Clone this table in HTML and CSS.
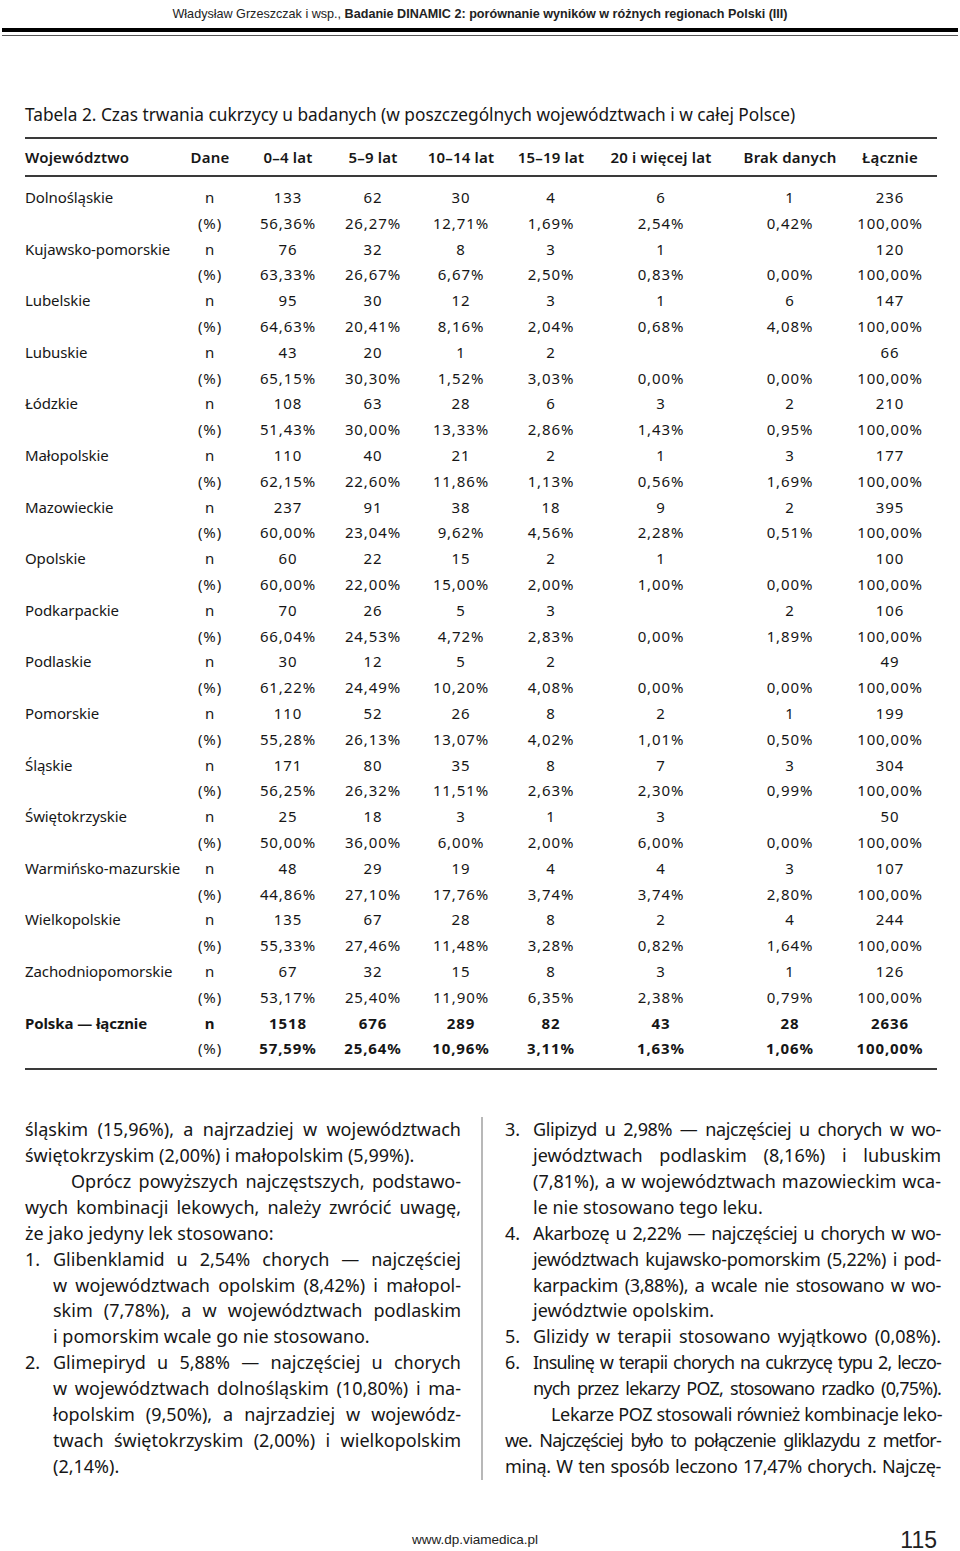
FILE: index.html
```html
<!DOCTYPE html>
<html lang="pl">
<head>
<meta charset="utf-8">
<title>Badanie DINAMIC 2 — Tabela 2</title>
<link rel="stylesheet" href="styles.css">
</head>
<body>
<div class="page">
  <header class="running">
    <p class="running-text">Władysław Grzeszczak i wsp., <b>Badanie DINAMIC 2: porównanie wyników w różnych regionach Polski (III)</b></p>
    <div class="rule-thick"></div>
    <div class="rule-thin"></div>
  </header>

  <section class="tbl-wrap">
    <h2 class="tbl-title">Tabela 2. Czas trwania cukrzycy u badanych (w poszczególnych województwach i w całej Polsce)</h2>
    <table class="data">
      <colgroup>
        <col class="c-name"><col class="c-dane"><col class="c-a"><col class="c-b"><col class="c-c"><col class="c-d"><col class="c-e"><col class="c-f"><col class="c-g">
      </colgroup>
      <thead>
        <tr><th class="name">Województwo</th><th>Dane</th><th>0–4 lat</th><th>5–9 lat</th><th>10–14 lat</th><th>15–19 lat</th><th>20 i więcej lat</th><th>Brak danych</th><th>Łącznie</th></tr>
      </thead>
      <tbody>
        <tr class="first"><td class="name">Dolnośląskie</td><td>n</td><td>133</td><td>62</td><td>30</td><td>4</td><td>6</td><td>1</td><td>236</td></tr>
        <tr><td class="name"></td><td>(%)</td><td>56,36%</td><td>26,27%</td><td>12,71%</td><td>1,69%</td><td>2,54%</td><td>0,42%</td><td>100,00%</td></tr>
        <tr><td class="name">Kujawsko-pomorskie</td><td>n</td><td>76</td><td>32</td><td>8</td><td>3</td><td>1</td><td></td><td>120</td></tr>
        <tr><td class="name"></td><td>(%)</td><td>63,33%</td><td>26,67%</td><td>6,67%</td><td>2,50%</td><td>0,83%</td><td>0,00%</td><td>100,00%</td></tr>
        <tr><td class="name">Lubelskie</td><td>n</td><td>95</td><td>30</td><td>12</td><td>3</td><td>1</td><td>6</td><td>147</td></tr>
        <tr><td class="name"></td><td>(%)</td><td>64,63%</td><td>20,41%</td><td>8,16%</td><td>2,04%</td><td>0,68%</td><td>4,08%</td><td>100,00%</td></tr>
        <tr><td class="name">Lubuskie</td><td>n</td><td>43</td><td>20</td><td>1</td><td>2</td><td></td><td></td><td>66</td></tr>
        <tr><td class="name"></td><td>(%)</td><td>65,15%</td><td>30,30%</td><td>1,52%</td><td>3,03%</td><td>0,00%</td><td>0,00%</td><td>100,00%</td></tr>
        <tr><td class="name">Łódzkie</td><td>n</td><td>108</td><td>63</td><td>28</td><td>6</td><td>3</td><td>2</td><td>210</td></tr>
        <tr><td class="name"></td><td>(%)</td><td>51,43%</td><td>30,00%</td><td>13,33%</td><td>2,86%</td><td>1,43%</td><td>0,95%</td><td>100,00%</td></tr>
        <tr><td class="name">Małopolskie</td><td>n</td><td>110</td><td>40</td><td>21</td><td>2</td><td>1</td><td>3</td><td>177</td></tr>
        <tr><td class="name"></td><td>(%)</td><td>62,15%</td><td>22,60%</td><td>11,86%</td><td>1,13%</td><td>0,56%</td><td>1,69%</td><td>100,00%</td></tr>
        <tr><td class="name">Mazowieckie</td><td>n</td><td>237</td><td>91</td><td>38</td><td>18</td><td>9</td><td>2</td><td>395</td></tr>
        <tr><td class="name"></td><td>(%)</td><td>60,00%</td><td>23,04%</td><td>9,62%</td><td>4,56%</td><td>2,28%</td><td>0,51%</td><td>100,00%</td></tr>
        <tr><td class="name">Opolskie</td><td>n</td><td>60</td><td>22</td><td>15</td><td>2</td><td>1</td><td></td><td>100</td></tr>
        <tr><td class="name"></td><td>(%)</td><td>60,00%</td><td>22,00%</td><td>15,00%</td><td>2,00%</td><td>1,00%</td><td>0,00%</td><td>100,00%</td></tr>
        <tr><td class="name">Podkarpackie</td><td>n</td><td>70</td><td>26</td><td>5</td><td>3</td><td></td><td>2</td><td>106</td></tr>
        <tr><td class="name"></td><td>(%)</td><td>66,04%</td><td>24,53%</td><td>4,72%</td><td>2,83%</td><td>0,00%</td><td>1,89%</td><td>100,00%</td></tr>
        <tr><td class="name">Podlaskie</td><td>n</td><td>30</td><td>12</td><td>5</td><td>2</td><td></td><td></td><td>49</td></tr>
        <tr><td class="name"></td><td>(%)</td><td>61,22%</td><td>24,49%</td><td>10,20%</td><td>4,08%</td><td>0,00%</td><td>0,00%</td><td>100,00%</td></tr>
        <tr><td class="name">Pomorskie</td><td>n</td><td>110</td><td>52</td><td>26</td><td>8</td><td>2</td><td>1</td><td>199</td></tr>
        <tr><td class="name"></td><td>(%)</td><td>55,28%</td><td>26,13%</td><td>13,07%</td><td>4,02%</td><td>1,01%</td><td>0,50%</td><td>100,00%</td></tr>
        <tr><td class="name">Śląskie</td><td>n</td><td>171</td><td>80</td><td>35</td><td>8</td><td>7</td><td>3</td><td>304</td></tr>
        <tr><td class="name"></td><td>(%)</td><td>56,25%</td><td>26,32%</td><td>11,51%</td><td>2,63%</td><td>2,30%</td><td>0,99%</td><td>100,00%</td></tr>
        <tr><td class="name">Świętokrzyskie</td><td>n</td><td>25</td><td>18</td><td>3</td><td>1</td><td>3</td><td></td><td>50</td></tr>
        <tr><td class="name"></td><td>(%)</td><td>50,00%</td><td>36,00%</td><td>6,00%</td><td>2,00%</td><td>6,00%</td><td>0,00%</td><td>100,00%</td></tr>
        <tr><td class="name">Warmińsko-mazurskie</td><td>n</td><td>48</td><td>29</td><td>19</td><td>4</td><td>4</td><td>3</td><td>107</td></tr>
        <tr><td class="name"></td><td>(%)</td><td>44,86%</td><td>27,10%</td><td>17,76%</td><td>3,74%</td><td>3,74%</td><td>2,80%</td><td>100,00%</td></tr>
        <tr><td class="name">Wielkopolskie</td><td>n</td><td>135</td><td>67</td><td>28</td><td>8</td><td>2</td><td>4</td><td>244</td></tr>
        <tr><td class="name"></td><td>(%)</td><td>55,33%</td><td>27,46%</td><td>11,48%</td><td>3,28%</td><td>0,82%</td><td>1,64%</td><td>100,00%</td></tr>
        <tr><td class="name">Zachodniopomorskie</td><td>n</td><td>67</td><td>32</td><td>15</td><td>8</td><td>3</td><td>1</td><td>126</td></tr>
        <tr><td class="name"></td><td>(%)</td><td>53,17%</td><td>25,40%</td><td>11,90%</td><td>6,35%</td><td>2,38%</td><td>0,79%</td><td>100,00%</td></tr>
        <tr class="total"><td class="name">Polska — łącznie</td><td>n</td><td>1518</td><td>676</td><td>289</td><td>82</td><td>43</td><td>28</td><td>2636</td></tr>
        <tr class="total last"><td class="name"></td><td class="unit">(%)</td><td>57,59%</td><td>25,64%</td><td>10,96%</td><td>3,11%</td><td>1,63%</td><td>1,06%</td><td>100,00%</td></tr>
      </tbody>
    </table>
  </section>

  <section class="cols">
    <div class="col col-left">
      <p class="para">
        <span class="ln">śląskim (15,96%), a najrzadziej w województwach</span>
        <span class="ln end">świętokrzyskim (2,00%) i małopolskim (5,99%).</span>
      </p>
      <p class="para">
        <span class="ln indent">Oprócz powyższych najczęstszych, podstawo-</span>
        <span class="ln">wych kombinacji lekowych, należy zwrócić uwagę,</span>
        <span class="ln end">że jako jedyny lek stosowano:</span>
      </p>
      <div class="item">
        <span class="num">1.</span>
        <div class="item-text">
          <span class="ln">Glibenklamid u 2,54% chorych — najczęściej</span>
          <span class="ln">w województwach opolskim (8,42%) i małopol-</span>
          <span class="ln">skim (7,78%), a w województwach podlaskim</span>
          <span class="ln end">i pomorskim wcale go nie stosowano.</span>
        </div>
      </div>
      <div class="item">
        <span class="num">2.</span>
        <div class="item-text">
          <span class="ln">Glimepiryd u 5,88% — najczęściej u chorych</span>
          <span class="ln">w województwach dolnośląskim (10,80%) i ma-</span>
          <span class="ln">łopolskim (9,50%), a najrzadziej w wojewódz-</span>
          <span class="ln">twach świętokrzyskim (2,00%) i wielkopolskim</span>
          <span class="ln end">(2,14%).</span>
        </div>
      </div>
    </div>
    <div class="col col-right">
      <div class="item">
        <span class="num">3.</span>
        <div class="item-text">
          <span class="ln t1">Glipizyd u 2,98% — najczęściej u chorych w wo-</span>
          <span class="ln">jewództwach podlaskim (8,16%) i lubuskim</span>
          <span class="ln">(7,81%), a w województwach mazowieckim wca-</span>
          <span class="ln end">le nie stosowano tego leku.</span>
        </div>
      </div>
      <div class="item">
        <span class="num">4.</span>
        <div class="item-text">
          <span class="ln t1">Akarbozę u 2,22% — najczęściej u chorych w wo-</span>
          <span class="ln t1">jewództwach kujawsko-pomorskim (5,22%) i pod-</span>
          <span class="ln t1">karpackim (3,88%), a wcale nie stosowano w wo-</span>
          <span class="ln end">jewództwie opolskim.</span>
        </div>
      </div>
      <div class="item">
        <span class="num">5.</span>
        <div class="item-text">
          <span class="ln">Glizidy w terapii stosowano wyjątkowo (0,08%).</span>
        </div>
      </div>
      <div class="item">
        <span class="num">6.</span>
        <div class="item-text">
          <span class="ln t2">Insulinę w terapii chorych na cukrzycę typu 2, leczo-</span>
          <span class="ln t2">nych przez lekarzy POZ, stosowano rzadko (0,75%).</span>
        </div>
      </div>
      <p class="para">
        <span class="ln indent t1">Lekarze POZ stosowali również kombinacje leko-</span>
        <span class="ln t2">we. Najczęściej było to połączenie gliklazydu z metfor-</span>
        <span class="ln t1">miną. W ten sposób leczono 17,47% chorych. Najczę-</span>
      </p>
    </div>
  </section>

  <footer class="foot">
    <span></span>
    <span class="url">www.dp.viamedica.pl</span>
    <span class="pageno">115</span>
  </footer>
</div>
</body>
</html>
```

FILE: styles.css
```css
html, body {
  margin: 0;
  padding: 0;
  background: #ffffff;
}

body {
  color: #161616;
  font-family: "Noto Sans", "Open Sans", sans-serif;
}

.page {
  width: 960px;
  min-height: 1551px;
}

/* running header */
.running {
  padding: 0 2px;
}

.running-text {
  margin: 0;
  padding-top: 6px;
  height: 22px;
  line-height: 16px;
  text-align: center;
  font-family: "Liberation Sans Narrow", "Arial Narrow", "Liberation Sans", sans-serif;
  font-stretch: condensed;
  font-size: 12.6px;
  color: #222;
}

.running-text b {
  font-weight: 700;
}

.rule-thick {
  height: 4px;
  background: #000;
}

.rule-thin {
  margin-top: 3px;
  height: 1px;
  background: #555;
}

/* table */
.tbl-wrap {
  padding: 0 23px 0 25px;
}

.tbl-title {
  margin: 67px 0 10px;
  font-size: 17.3px;
  line-height: 24px;
  font-weight: 400;
  color: #161616;
}

.data {
  width: 912px;
  border-collapse: collapse;
  table-layout: fixed;
  font-size: 15px;
}

.c-name { width: 160px; }
.c-dane { width: 50px; }
.c-a { width: 106px; }
.c-b { width: 64px; }
.c-c { width: 112px; }
.c-d { width: 68px; }
.c-e { width: 152px; }
.c-f { width: 106px; }
.c-g { width: 94px; }

.data th {
  height: 36px;
  padding: 0;
  font-weight: 600;
  letter-spacing: 0.2px;
  text-align: center;
  white-space: nowrap;
  border-top: 2px solid #3a3a3a;
  border-bottom: 2px solid #3a3a3a;
  line-height: 20px;
}

.data td {
  height: 25.8px;
  padding: 0;
  line-height: 25.8px;
  text-align: center;
  white-space: nowrap;
  letter-spacing: 0.9px;
}

.data td.name {
  text-align: left;
  letter-spacing: -0.1px;
}

.data th.name {
  text-align: left;
}

.data tr.first td {
  padding-top: 8px;
}

.data tr.last td {
  padding-bottom: 6px;
  border-bottom: 2px solid #3a3a3a;
}

.data tr.total td {
  font-weight: 700;
}

.data tr.total td.unit {
  font-weight: 400;
}

/* text columns */
.cols {
  display: grid;
  grid-template-columns: 436px 458px;
  column-gap: 20px;
  margin: 47px 0 0 25px;
  font-size: 18px;
  line-height: 25.9px;
}

.col-right {
  border-left: 2px solid #b8b8b8;
  padding-left: 22px;
  width: 436px;
}

.para {
  margin: 0;
}

.ln {
  display: block;
  white-space: nowrap;
  text-align: justify;
  text-align-last: justify;
}

.ln.end {
  text-align-last: left;
}

.ln.indent {
  text-indent: 46px;
}

.ln.t1 {
  letter-spacing: -0.35px;
}

.ln.t2 {
  letter-spacing: -0.8px;
}

.item {
  display: grid;
  grid-template-columns: 28px 1fr;
}

.num {
  display: block;
}

/* footer */
.foot {
  display: grid;
  grid-template-columns: 1fr auto 1fr;
  align-items: center;
  margin-top: 47px;
  padding: 0 23px 0 13px;
  height: 26px;
  line-height: 26px;
}

.url {
  font-family: "Liberation Sans Narrow", "Arial Narrow", "Liberation Sans", sans-serif;
  font-stretch: condensed;
  font-size: 13.5px;
  color: #222;
}

.pageno {
  justify-self: end;
  font-family: "Liberation Sans Narrow", "Arial Narrow", "Liberation Sans", sans-serif;
  font-stretch: condensed;
  font-size: 23px;
  color: #222;
}
```
